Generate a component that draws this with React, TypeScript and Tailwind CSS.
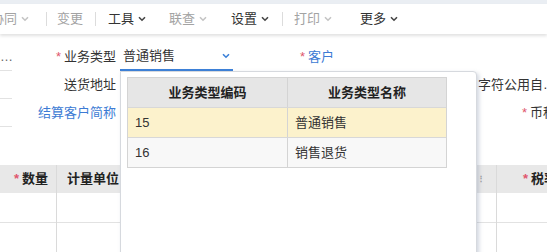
import type { ReactNode } from 'react'

const font = { fontFamily: '"Liberation Sans", "Noto Sans CJK SC", sans-serif' }

function Chevron({ className = '' }: { className?: string }) {
  return (
    <svg width="8" height="6" viewBox="0 0 8 6" className={className}>
      <path d="M1 1.2 L4 4.2 L7 1.2" fill="none" stroke="currentColor" strokeWidth="1.6" />
    </svg>
  )
}

function ToolItem({ label, muted, chevron = true }: { label: string; muted?: boolean; chevron?: boolean }) {
  return (
    <div className={`flex items-center gap-[4px] ${muted ? 'text-[#a3a3a3]' : 'text-[#333]'}`}>
      <span>{label}</span>
      {chevron && <Chevron className={muted ? 'text-[#c4c4c4]' : 'text-[#444]'} />}
    </div>
  )
}

const Sep = () => <div className="h-[14px] w-px bg-[#dcdcdc]" />

const Star = () => <span className="mr-[3px] text-[#e0566d]">*</span>

function Label({ children, className = '' }: { children: ReactNode; className?: string }) {
  return <div className={`flex h-[28px] items-center ${className}`}>{children}</div>
}

export default function App() {
  const opts = [
    { code: '15', name: '普通销售', active: true },
    { code: '16', name: '销售退货', active: false },
  ]

  return (
    <div style={font} className="relative h-[252px] w-[547px] overflow-hidden bg-white text-[13px] text-[#333]">
      {/* toolbar */}
      <div className="h-[4px] bg-[#eaeef3]" />
      <div className="flex h-[30px] items-center bg-white shadow-[0_2px_3px_rgba(0,0,0,0.12)]">
        <div className="ml-[-9px] flex items-center">
          <ToolItem label="协同" muted />
          <div className="ml-[17px]"><Sep /></div>
          <div className="ml-[10px]"><ToolItem label="变更" muted chevron={false} /></div>
          <div className="ml-[12px]"><Sep /></div>
          <div className="ml-[12px]"><ToolItem label="工具" /></div>
          <div className="ml-[23px]"><ToolItem label="联查" muted /></div>
          <div className="ml-[24px]"><ToolItem label="设置" /></div>
          <div className="ml-[13px]"><Sep /></div>
          <div className="ml-[11px]"><ToolItem label="打印" muted /></div>
          <div className="ml-[28px]"><ToolItem label="更多" /></div>
        </div>
      </div>

      {/* form */}
      <div className="mt-[9px] flex">
        <div className="w-[12px] shrink-0">
          <Label className="border-b border-[#e2e2e2] text-[#666]">…</Label>
          <div className="h-[28px] border-b border-[#e2e2e2]" />
          <div className="h-[28px] border-b border-[#e2e2e2]" />
        </div>
        <div className="w-[108px] shrink-0 pr-[4px] text-right">
          <Label className="justify-end"><Star />业务类型</Label>
          <Label className="justify-end">送货地址</Label>
          <Label className="justify-end text-[#3d7bd4]">结算客户简称</Label>
        </div>
        <div className="w-[113px] shrink-0">
          <Label className="justify-between border-b-2 border-[#3b80d8] pl-[3px] pr-[3px]">
            <span>普通销售</span>
            <Chevron className="text-[#3b80d8]" />
          </Label>
        </div>
        <div className="ml-[67px] w-[150px] shrink-0">
          <Label><Star /><span className="text-[#3d7bd4]">客户</span></Label>
        </div>
        <div className="ml-[28px] shrink-0">
          <div className="h-[28px]" />
          <Label className="whitespace-nowrap">字符公用自…</Label>
          <Label className="pl-[44px] whitespace-nowrap"><Star />币种</Label>
        </div>
      </div>

      {/* detail grid */}
      <div className="mt-[38px] flex whitespace-nowrap">
        {[
          { w: 'w-[57px]', head: <><Star />数量</>, cls: 'justify-center pl-[6px]' },
          { w: 'w-[73px]', head: '计量单位', cls: 'justify-center' },
          { w: 'w-[347px]', head: '', cls: '' },
          { w: 'w-[20px]', head: <span className="text-[8px] text-[#999]">⋮</span>, cls: 'justify-start' },
          { w: 'w-[120px]', head: <><Star />税率</>, cls: 'pl-[26px]' },
        ].map((c, i) => (
          <div key={i} className={`${c.w} shrink-0 border-r border-[#dadada]`}>
            <div className={`flex h-[28px] items-center bg-[#e8e8e8] font-bold text-[#222] ${c.cls}`}>{c.head}</div>
            <div className="h-[30px] border-b border-[#e2e2e2]" />
            <div className="h-[30px] border-b border-[#e2e2e2]" />
          </div>
        ))}
      </div>

      {/* dropdown */}
      <div className="absolute left-[120px] top-[71px] h-[200px] w-[357px] rounded-tr-[4px] border border-[#d6d9de] bg-white shadow-[2px_2px_4px_rgba(120,135,160,0.35)]">
        <div className="ml-[6px] mt-[5px] w-[320px] border border-[#d4d4d4]">
          <div className="flex h-[29px] bg-[#e6e6e6] font-bold text-[#222]">
            <div className="flex w-[160px] items-center justify-center border-r border-[#d4d4d4]">业务类型编码</div>
            <div className="flex flex-1 items-center justify-center">业务类型名称</div>
          </div>
          {opts.map((o) => (
            <div key={o.code} className={`flex h-[30px] border-t border-[#d8d8d8] ${o.active ? 'bg-[#fcf2cc]' : 'bg-[#f8f8f8]'}`}>
              <div className="flex w-[160px] items-center border-r border-[#d4d4d4] pl-[7px]">{o.code}</div>
              <div className="flex flex-1 items-center pl-[7px]">{o.name}</div>
            </div>
          ))}
        </div>
      </div>
    </div>
  )
}
